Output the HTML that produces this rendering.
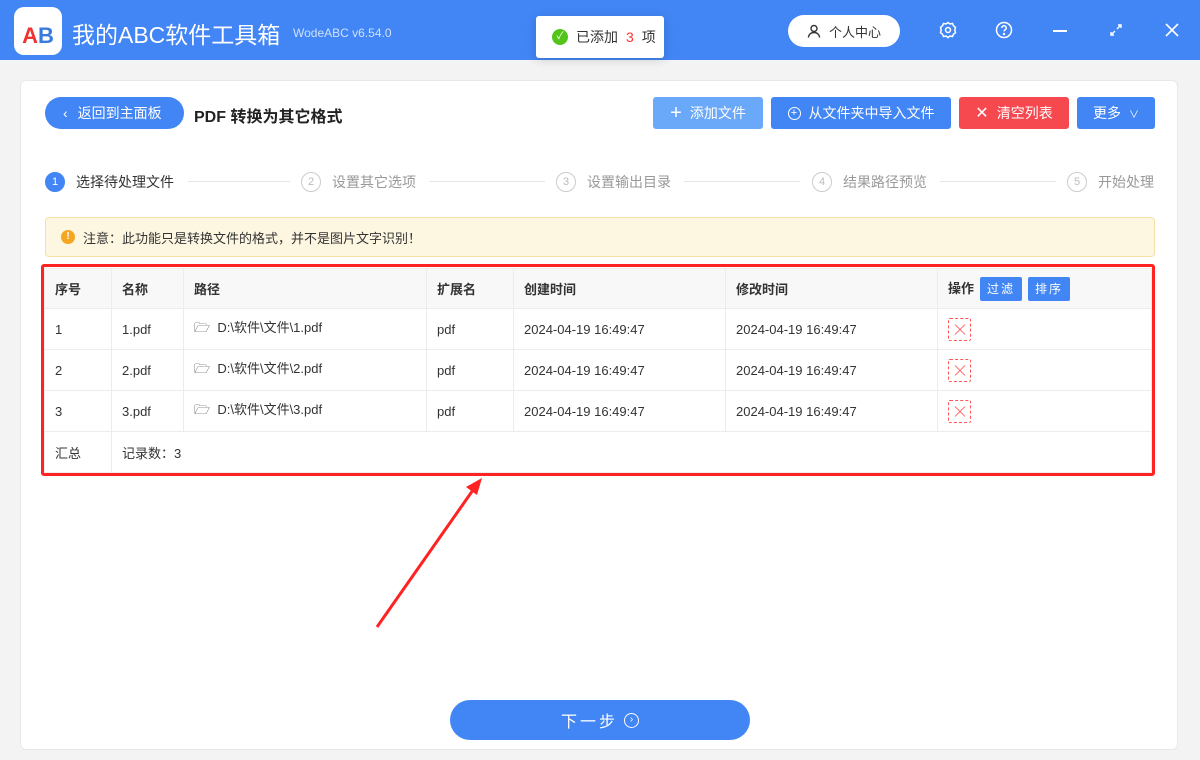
<!DOCTYPE html>
<html><head><meta charset="utf-8"><style>
*{box-sizing:border-box;margin:0;padding:0}
body{width:1200px;height:760px;overflow:hidden;background:#f3f3f3;font-family:"Liberation Sans","Noto Sans CJK SC",sans-serif;font-size:14px;color:#333;position:relative}
.hdr{position:absolute;left:0;top:0;width:1200px;height:60px;background:#4285f4}
.abs{position:absolute}
.card{position:absolute;left:20px;top:80px;width:1158px;height:670px;background:#fff;border:1px solid #e8e8e8;border-radius:6px}
.btn{position:absolute;top:97px;height:32px;color:#fff;border-radius:3px;font-size:14px;display:flex;align-items:center;justify-content:center;gap:8px}
.step{position:absolute;top:172px;display:flex;align-items:center;gap:11px;color:#999;font-size:14px}
.circ{width:20px;height:20px;border-radius:50%;border:1px solid #ccc;font-size:11px;display:flex;align-items:center;justify-content:center;color:#bbb}
.line{position:absolute;top:181px;height:1px;background:#e5e5e5}
table{position:absolute;left:44px;top:268px;width:1108px;border-collapse:collapse;font-size:13px}
td{border:1px solid #ececec;height:41px;padding-left:10px;color:#333}
tr.h td{background:#f8f8f8;font-weight:bold;height:40px}
.x{display:inline-block;width:23px;height:23px;border:1px dashed #f55;border-radius:2px;position:relative;vertical-align:middle}
.x:before,.x:after{content:"";position:absolute;left:4px;top:10px;width:14px;height:1px;background:#f66;transform:rotate(45deg)}
.x:after{transform:rotate(-45deg)}
.sb{display:inline-block;background:#4285f4;color:#fff;font-size:12px;padding:0 7px;height:24px;line-height:24px;border-radius:2px;margin-left:6px;letter-spacing:2px;font-weight:normal}
.fd{color:#333}
</style></head><body>
<div class="hdr"></div>
<div class="abs" style="left:14px;top:7px;width:48px;height:48px;background:#fff;border-radius:10px;font-weight:bold;font-size:22px;color:#3a7be0;text-align:center;line-height:58px"><span style="color:#e33">A</span>B</div>
<div class="abs" style="left:72px;top:16px;color:#fff;font-size:23px">我的ABC软件工具箱</div>
<div class="abs" style="left:293px;top:26px;color:#cfe0ff;font-size:12px">WodeABC v6.54.0</div>
<div class="abs" style="left:536px;top:16px;width:128px;height:42px;background:#fff;border-radius:3px;box-shadow:0 2px 10px rgba(0,0,0,.15);display:flex;align-items:center;padding-left:16px;gap:8px;font-size:14px"><span style="width:16px;height:16px;border-radius:50%;background:#52c41a;color:#fff;font-size:10px;text-align:center;line-height:16px">✓</span>已添加 <span style="color:#f33">3</span> 项</div>
<div class="abs" style="left:788px;top:15px;width:112px;height:32px;background:#fff;border-radius:16px;display:flex;align-items:center;justify-content:center;gap:8px;font-size:13px"><svg width="14" height="14" viewBox="0 0 14 14" fill="none" stroke="#333" stroke-width="1.4"><circle cx="7" cy="4.5" r="3"/><path d="M1.5 13.5c0-3 2.5-5 5.5-5s5.5 2 5.5 5"/></svg>个人中心</div>
<svg class="abs" style="left:939px;top:21px" width="18" height="18" viewBox="0 0 18 18" fill="none" stroke="#fff" stroke-width="1.5"><circle cx="9" cy="9" r="2.5"/><path d="M9 1.5l2 1.5 2.5-.5 1 2.3 2 1.5-.7 2.7.7 2.7-2 1.5-1 2.3-2.5-.5-2 1.5-2-1.5-2.5.5-1-2.3-2-1.5.7-2.7-.7-2.7 2-1.5 1-2.3 2.5.5z"/></svg>
<svg class="abs" style="left:995px;top:21px" width="18" height="18" viewBox="0 0 18 18" fill="none" stroke="#fff" stroke-width="1.5"><circle cx="9" cy="9" r="7.5"/><path d="M6.8 7a2.2 2.2 0 1 1 3 2c-.6.3-.8.7-.8 1.4"/><circle cx="9" cy="13" r=".5" fill="#fff"/></svg>
<div class="abs" style="left:1053px;top:30px;width:14px;height:2px;background:#fff"></div>
<svg class="abs" style="left:1109px;top:23px" width="14" height="14" viewBox="0 0 14 14" fill="none" stroke="#fff" stroke-width="1.4"><path d="M2 12l4-4M8 6l4-4M9 2h3v3M2 9v3h3"/></svg>
<svg class="abs" style="left:1164px;top:22px" width="16" height="16" viewBox="0 0 16 16" stroke="#fff" stroke-width="1.6"><path d="M2 2l12 12M14 2L2 14"/></svg>
<div class="card"></div>
<div class="abs" style="left:45px;top:97px;width:139px;height:32px;background:#4285f4;border-radius:16px;color:#fff;display:flex;align-items:center;padding-left:18px;gap:10px;font-size:14px"><span style="font-size:14px">‹</span>返回到主面板</div>
<div class="abs" style="left:194px;top:103px;font-size:16px;font-weight:bold;color:#222">PDF 转换为其它格式</div>
<div class="btn" style="left:653px;width:110px;background:#6aa8fa"><b style="font-size:20px;font-weight:normal">+</b>添加文件</div>
<div class="btn" style="left:771px;width:180px;background:#4285f4"><span style="width:13px;height:13px;border:1.3px solid #fff;border-radius:50%;font-size:11px;line-height:10px;text-align:center">+</span>从文件夹中导入文件</div>
<div class="btn" style="left:959px;width:110px;background:#f5494f"><span style="font-size:16px">✕</span>清空列表</div>
<div class="btn" style="left:1077px;width:78px;background:#4285f4">更多 <span style="font-size:10px">∨</span></div>
<div class="step" style="left:45px"><div class="circ" style="background:#4285f4;border-color:#4285f4;color:#fff">1</div><span style="color:#333">选择待处理文件</span></div>
<div class="line" style="left:188px;width:102px"></div>
<div class="step" style="left:301px"><div class="circ">2</div>设置其它选项</div>
<div class="line" style="left:429px;width:116px"></div>
<div class="step" style="left:556px"><div class="circ">3</div>设置输出目录</div>
<div class="line" style="left:684px;width:116px"></div>
<div class="step" style="left:812px"><div class="circ">4</div>结果路径预览</div>
<div class="line" style="left:940px;width:116px"></div>
<div class="step" style="left:1067px"><div class="circ">5</div>开始处理</div>
<div class="abs" style="left:45px;top:217px;width:1110px;height:40px;background:#fdf6e0;border:1px solid #f6e2a6;border-radius:4px;display:flex;align-items:center;padding-left:15px;gap:8px;font-size:13px;color:#333"><span style="width:14px;height:14px;border-radius:50%;background:#f5a623;color:#fff;font-size:10px;font-weight:bold;text-align:center;line-height:14px">!</span>注意：此功能只是转换文件的格式，并不是图片文字识别！</div>
<table>
<tr class="h"><td style="width:67px">序号</td><td style="width:72px">名称</td><td style="width:243px">路径</td><td style="width:87px">扩展名</td><td style="width:212px">创建时间</td><td style="width:212px">修改时间</td><td>操作<span class="sb">过滤</span><span class="sb">排序</span></td></tr>
<tr><td>1</td><td>1.pdf</td><td><span class="fd">🗁</span>&nbsp; D:\软件\文件\1.pdf</td><td>pdf</td><td>2024-04-19 16:49:47</td><td>2024-04-19 16:49:47</td><td><span class="x"></span></td></tr>
<tr><td>2</td><td>2.pdf</td><td><span class="fd">🗁</span>&nbsp; D:\软件\文件\2.pdf</td><td>pdf</td><td>2024-04-19 16:49:47</td><td>2024-04-19 16:49:47</td><td><span class="x"></span></td></tr>
<tr><td>3</td><td>3.pdf</td><td><span class="fd">🗁</span>&nbsp; D:\软件\文件\3.pdf</td><td>pdf</td><td>2024-04-19 16:49:47</td><td>2024-04-19 16:49:47</td><td><span class="x"></span></td></tr>
<tr><td>汇总</td><td colspan="6" style="border-left:1px solid #ececec">记录数：3</td></tr>
</table>
<div class="abs" style="left:41px;top:264px;width:1114px;height:212px;border:3px solid #f22;border-radius:3px"></div>
<svg class="abs" style="left:370px;top:475px" width="120" height="160"><path d="M7 152L103 15" stroke="#f22" stroke-width="3"/><path d="M112 3L96 12 107 20z" fill="#f22"/></svg>
<div class="abs" style="left:450px;top:700px;width:300px;height:40px;background:#4285f4;border-radius:20px;color:#fff;font-size:16px;display:flex;align-items:center;justify-content:center;gap:6px;letter-spacing:3px">下一步 <span style="width:15px;height:15px;border:1.3px solid #fff;border-radius:50%;font-size:10px;line-height:12px;text-align:center;letter-spacing:0">›</span></div>
</body></html>
